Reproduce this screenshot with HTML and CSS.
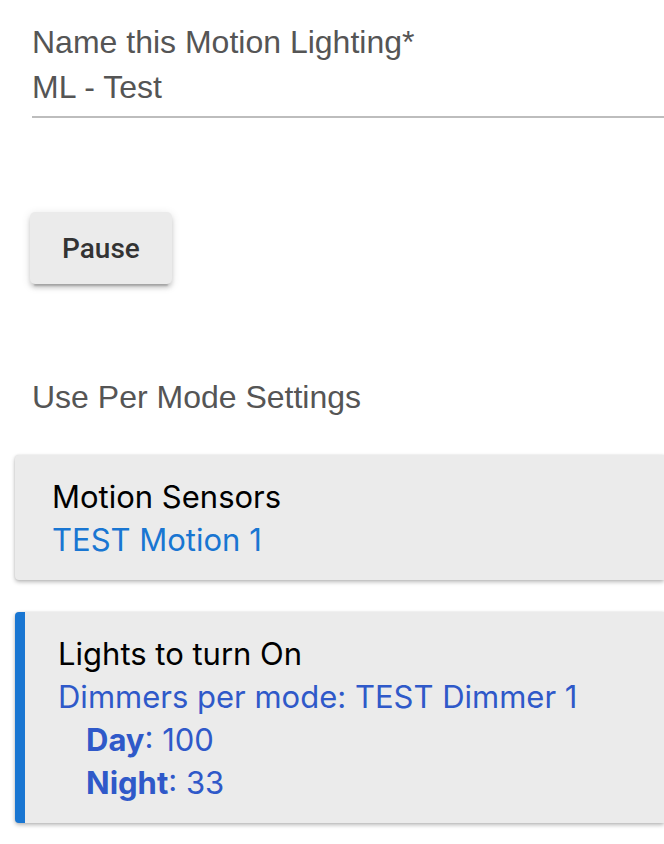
FILE: index.html
```html
<!DOCTYPE html>
<html lang="en">
<head>
<meta charset="utf-8">
<title>Motion Lighting</title>
<link rel="stylesheet" href="styles.css">
</head>
<body>
<main class="page">
  <section class="field">
    <label class="field-label" for="name">Name this Motion Lighting*</label>
    <div class="field-value" id="name">ML - Test</div>
  </section>

  <div class="actions">
    <button class="btn" type="button">Pause</button>
  </div>

  <p class="option">Use Per Mode Settings</p>

  <div class="card">
    <div class="card-title">Motion Sensors</div>
    <div class="card-value">TEST Motion 1</div>
  </div>

  <div class="card card-active">
    <div class="card-title">Lights to turn On</div>
    <div class="card-value dark">Dimmers per mode: TEST Dimmer 1</div>
    <div class="card-value dark indent"><b>Day</b>: 100</div>
    <div class="card-value dark indent"><b>Night</b>: 33</div>
  </div>
</main>
</body>
</html>
```

FILE: styles.css
```css
html, body {
  margin: 0;
  padding: 0;
  background: #ffffff;
}

.page {
  padding: 22px 0 20px 15px;
  font-family: "Liberation Sans", Arial, sans-serif;
}

.field {
  padding-left: 17px;
}

.field-label {
  display: block;
  font-size: 32px;
  line-height: 40px;
  color: #555555;
}

.field-value {
  margin-top: 5px;
  font-size: 32px;
  line-height: 40px;
  color: #555555;
  padding-bottom: 9px;
  border-bottom: 2px solid #bdbdbd;
}

.actions {
  padding: 94px 0 0 15px;
}

.btn {
  height: 72px;
  padding: 0 32px;
  border: none;
  border-radius: 5px;
  background: #ebebeb;
  color: #333333;
  font-family: Roboto, "Liberation Sans", sans-serif;
  font-weight: 500;
  font-size: 28px;
  box-shadow: 0 6px 2px -4px rgba(0,0,0,.2), 0 4px 4px 0 rgba(0,0,0,.14), 0 2px 10px 0 rgba(0,0,0,.12);
}

.option {
  margin: 93px 0 0 17px;
  font-size: 32px;
  line-height: 40px;
  color: #555555;
}

.card {
  margin-top: 38px;
  padding: 20px 0 19px 37px;
  background: #ebebeb;
  border-radius: 4px 0 0 4px;
  box-shadow: 0 2px 4px rgba(0,0,0,.28), 0 0 2px rgba(0,0,0,.1);
  font-family: Inter, "Noto Sans", sans-serif;
  font-size: 31px;
  line-height: 43px;
}

.card-active {
  margin-top: 32px;
  padding-left: 33px;
  border-left: 10px solid #1976d2;
}

.card-title {
  color: #000000;
}

.card-value {
  color: #1976d2;
}

.card-value.dark {
  color: #2f59c9;
}

.indent {
  padding-left: 28px;
}
```
